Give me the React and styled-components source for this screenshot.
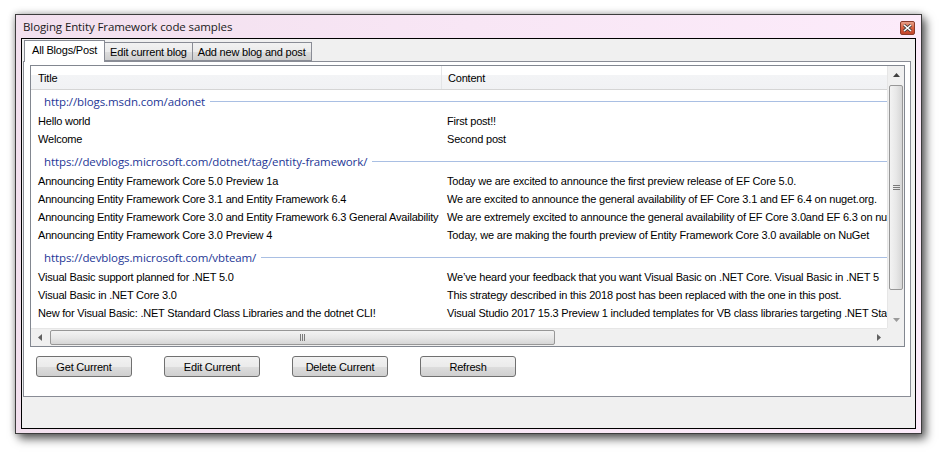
import React from "react";
import styled, { createGlobalStyle } from "styled-components";

const GlobalStyle = createGlobalStyle`
  html, body {
    margin: 0;
    padding: 0;
    background: #ffffff;
  }
  body {
    font-family: "Liberation Sans", Arial, sans-serif;
  }
`;

const groups = [
  {
    url: "http://blogs.msdn.com/adonet",
    rows: [
      ["Hello world", "First post!!"],
      ["Welcome", "Second post"],
    ],
  },
  {
    url: "https://devblogs.microsoft.com/dotnet/tag/entity-framework/",
    rows: [
      ["Announcing Entity Framework Core 5.0 Preview 1a", "Today we are excited to announce the first preview release of EF Core 5.0."],
      ["Announcing Entity Framework Core 3.1 and Entity Framework 6.4", "We are excited to announce the general availability of EF Core 3.1 and EF 6.4 on nuget.org."],
      ["Announcing Entity Framework Core 3.0 and Entity Framework 6.3 General Availability", "We are extremely excited to announce the general availability of EF Core 3.0and EF 6.3 on nuget.org."],
      ["Announcing Entity Framework Core 3.0 Preview 4", "Today, we are making the fourth preview of Entity Framework Core 3.0 available on NuGet"],
    ],
  },
  {
    url: "https://devblogs.microsoft.com/vbteam/",
    rows: [
      ["Visual Basic support planned for .NET 5.0", "We\u2019ve heard your feedback that you want Visual Basic on .NET Core. Visual Basic in .NET 5"],
      ["Visual Basic in .NET Core 3.0", "This strategy described in this 2018 post has been replaced with the one in this post."],
      ["New for Visual Basic: .NET Standard Class Libraries and the dotnet CLI!", "Visual Studio 2017 15.3 Preview 1 included templates for VB class libraries targeting .NET Standard"],
    ],
  },
];

const tabs = ["All Blogs/Post", "Edit current blog", "Add new blog and post"];
const buttons = ["Get Current", "Edit Current", "Delete Current", "Refresh"];

function App() {
  return (
    <>
      <GlobalStyle />
      <Page>
        <Window>
          <TitleBar>
            <Caption>Bloging Entity Framework code samples</Caption>
            <CloseButton>
              <svg width="9" height="8" viewBox="0 0 9 8">
                <path d="M1 1 L8 7 M8 1 L1 7" stroke="#3a3a3a" strokeWidth="3" />
                <path d="M1 1 L8 7 M8 1 L1 7" stroke="#ffffff" strokeWidth="1.6" />
              </svg>
            </CloseButton>
          </TitleBar>
          <Client>
            <TabStrip>
              {tabs.map((t, i) => (
                <Tab key={t} $active={i === 0}>
                  {t}
                </Tab>
              ))}
            </TabStrip>
            <TabPage>
              <ListView>
                <ListBody>
                  <Header>
                    <HeaderCell $w={410}>Title</HeaderCell>
                    <HeaderCell $w={460}>Content</HeaderCell>
                  </Header>
                  {groups.map((g) => (
                    <Group key={g.url}>
                      <GroupHeader>
                        <GroupTitle>{g.url}</GroupTitle>
                        <GroupLine />
                      </GroupHeader>
                      {g.rows.map((r) => (
                        <Row key={r[0]}>
                          <Cell $w={410}>{r[0]}</Cell>
                          <Cell $w={460}>{r[1]}</Cell>
                        </Row>
                      ))}
                    </Group>
                  ))}
                </ListBody>
                <VScroll>
                  <ArrowBox>
                    <svg width="7" height="4" viewBox="0 0 7 4">
                      <path d="M0 4 L3.5 0 L7 4 Z" fill="#404040" />
                    </svg>
                  </ArrowBox>
                  <VTrack>
                    <VThumb>
                      <svg width="7" height="7" viewBox="0 0 7 7">
                        <path d="M0 1.5 H7 M0 3.5 H7 M0 5.5 H7" stroke="#7a7a7a" strokeWidth="1" />
                      </svg>
                    </VThumb>
                  </VTrack>
                  <ArrowBox>
                    <svg width="7" height="4" viewBox="0 0 7 4">
                      <path d="M0 0 L3.5 4 L7 0 Z" fill="#9a9a9a" />
                    </svg>
                  </ArrowBox>
                </VScroll>
                <HScroll>
                  <ArrowBox>
                    <svg width="4" height="7" viewBox="0 0 4 7">
                      <path d="M4 0 L0 3.5 L4 7 Z" fill="#606060" />
                    </svg>
                  </ArrowBox>
                  <HTrack>
                    <HThumb>
                      <svg width="7" height="7" viewBox="0 0 7 7">
                        <path d="M1.5 0 V7 M3.5 0 V7 M5.5 0 V7" stroke="#7a7a7a" strokeWidth="1" />
                      </svg>
                    </HThumb>
                  </HTrack>
                  <ArrowBox>
                    <svg width="4" height="7" viewBox="0 0 4 7">
                      <path d="M0 0 L4 3.5 L0 7 Z" fill="#606060" />
                    </svg>
                  </ArrowBox>
                </HScroll>
                <Corner />
              </ListView>
              <ButtonRow>
                {buttons.map((b) => (
                  <Button key={b}>{b}</Button>
                ))}
              </ButtonRow>
            </TabPage>
          </Client>
        </Window>
      </Page>
    </>
  );
}

const Page = styled.div`
  width: 941px;
  height: 453px;
  padding: 14px 0 0 15px;
  box-sizing: border-box;
`;

const Window = styled.div`
  width: 907px;
  height: 420px;
  box-sizing: border-box;
  border: 1px solid #3c3c3c;
  background: linear-gradient(90deg, #f2e0ee 0%, #f8e6f5 50%, #fcebfa 100%);
  padding: 0 5px 4px 5px;
  display: flex;
  flex-direction: column;
  box-shadow: 4px 5px 9px rgba(0, 0, 0, 0.6), 0 0 7px rgba(0, 0, 0, 0.3);
`;

const TitleBar = styled.div`
  height: 23px;
  display: flex;
  align-items: center;
  justify-content: space-between;
  padding: 0 1px 0 2px;
`;

const Caption = styled.span`
  font-family: "Open Sans", "Noto Sans", sans-serif;
  font-size: 11.5px;
  color: #1a1a1a;
  letter-spacing: -0.1px;
`;

const CloseButton = styled.div`
  width: 15px;
  height: 14px;
  box-sizing: border-box;
  margin-top: 2px;
  border: 1px solid #8a3a2a;
  border-radius: 2px;
  background: linear-gradient(180deg, #e8a08a 0%, #d8603f 50%, #c2452a 100%);
  display: flex;
  align-items: center;
  justify-content: center;
`;

const Client = styled.div`
  flex: 1;
  border: 1px solid #000000;
  background: #f0f0f0;
  display: flex;
  flex-direction: column;
  padding: 1px 4px 31px 1px;
`;

const TabStrip = styled.div`
  height: 21px;
  display: flex;
  align-items: flex-end;
  padding-left: 1px;
  position: relative;
  z-index: 1;
`;

const Tab = styled.div`
  box-sizing: border-box;
  height: ${(p) => (p.$active ? "22px" : "19px")};
  margin-bottom: ${(p) => (p.$active ? "-1px" : "0")};
  margin-left: ${(p) => (p.$active ? "0" : "-1px")};
  padding: ${(p) => (p.$active ? "3px 7px 0" : "0 5px")};
  border: 1px solid #898c95;
  border-bottom: ${(p) => (p.$active ? "none" : "1px solid #898c95")};
  background: ${(p) => (p.$active ? "#ffffff" : "linear-gradient(180deg, #f2f2f2 0%, #ebebeb 50%, #dddddd 51%, #cfcfcf 100%)")};
  font-size: 11px;
  letter-spacing: -0.2px;
  color: #000000;
  display: flex;
  align-items: ${(p) => (p.$active ? "flex-start" : "center")};
  white-space: nowrap;
  &:first-child {
    margin-left: 0;
  }
`;

const TabPage = styled.div`
  flex: 1;
  border: 1px solid #898c95;
  background: #ffffff;
  padding: 3px 5px 0 6px;
  display: flex;
  flex-direction: column;
`;

const ListView = styled.div`
  height: 282px;
  box-sizing: border-box;
  border: 1px solid #828790;
  display: grid;
  grid-template-columns: 1fr 17px;
  grid-template-rows: 1fr 18px;
  overflow: hidden;
`;

const ListBody = styled.div`
  overflow: hidden;
  min-width: 0;
`;

const Header = styled.div`
  height: 23px;
  display: flex;
  border-bottom: 1px solid #d5d5d5;
  background: linear-gradient(180deg, #ffffff 0%, #ffffff 40%, #f3f4f6 41%, #f1f2f4 100%);
`;

const HeaderCell = styled.div`
  width: ${(p) => p.$w}px;
  flex-shrink: 0;
  box-sizing: border-box;
  padding: 6px 0 0 7px;
  font-size: 11px;
  letter-spacing: -0.2px;
  color: #000000;
  & + & {
    border-left: 1px solid #e3e4e6;
    padding-left: 6px;
  }
`;

const Group = styled.div`
  & + & {
    margin-top: 2px;
  }
`;

const GroupHeader = styled.div`
  height: 22px;
  display: flex;
  align-items: center;
  padding-left: 13px;
`;

const GroupTitle = styled.span`
  font-family: "Open Sans", "Noto Sans", sans-serif;
  font-size: 11.5px;
  color: #1e3796;
  white-space: nowrap;
  letter-spacing: -0.1px;
`;

const GroupLine = styled.div`
  flex: 1;
  height: 1px;
  margin-left: 5px;
  background: #a9bfe3;
`;

const Row = styled.div`
  height: 18px;
  display: flex;
  align-items: center;
`;

const Cell = styled.div`
  width: ${(p) => p.$w}px;
  flex-shrink: 0;
  box-sizing: border-box;
  padding-left: 7px;
  font-size: 11px;
  letter-spacing: -0.2px;
  color: #000000;
  white-space: nowrap;
  overflow: hidden;
  & + & {
    padding-left: 6px;
  }
`;

const VScroll = styled.div`
  display: flex;
  flex-direction: column;
  background: #f0f0f0;
  border-left: 1px solid #e6e6e6;
`;

const ArrowBox = styled.div`
  width: 17px;
  height: 17px;
  flex-shrink: 0;
  display: flex;
  align-items: center;
  justify-content: center;
`;

const VTrack = styled.div`
  flex: 1;
  padding: 2px 1px 21px 1px;
  display: flex;
  flex-direction: column;
`;

const VThumb = styled.div`
  flex: 1;
  box-sizing: border-box;
  border: 1px solid #979797;
  border-radius: 2px;
  background: linear-gradient(90deg, #f3f3f3 0%, #e8e8e8 50%, #d6d6d6 100%);
  display: flex;
  align-items: center;
  justify-content: center;
`;

const HScroll = styled.div`
  display: flex;
  align-items: center;
  background: #f0f0f0;
  border-top: 1px solid #e6e6e6;
`;

const HTrack = styled.div`
  flex: 1;
  height: 100%;
  box-sizing: border-box;
  padding: 1px 315px 1px 2px;
  display: flex;
`;

const HThumb = styled.div`
  flex: 1;
  box-sizing: border-box;
  border: 1px solid #979797;
  border-radius: 2px;
  background: linear-gradient(180deg, #f3f3f3 0%, #e8e8e8 50%, #d6d6d6 100%);
  display: flex;
  align-items: center;
  justify-content: center;
`;

const Corner = styled.div`
  background: #f0f0f0;
`;

const ButtonRow = styled.div`
  display: flex;
  gap: 32px;
  padding: 9px 0 0 6px;
`;

const Button = styled.div`
  width: 96px;
  height: 21px;
  box-sizing: border-box;
  border: 1px solid #707070;
  border-radius: 3px;
  background: linear-gradient(180deg, #f2f2f2 0%, #ebebeb 50%, #dddddd 51%, #cfcfcf 100%);
  font-size: 11px;
  letter-spacing: -0.2px;
  color: #000000;
  display: flex;
  align-items: center;
  justify-content: center;
`;

export default App;
